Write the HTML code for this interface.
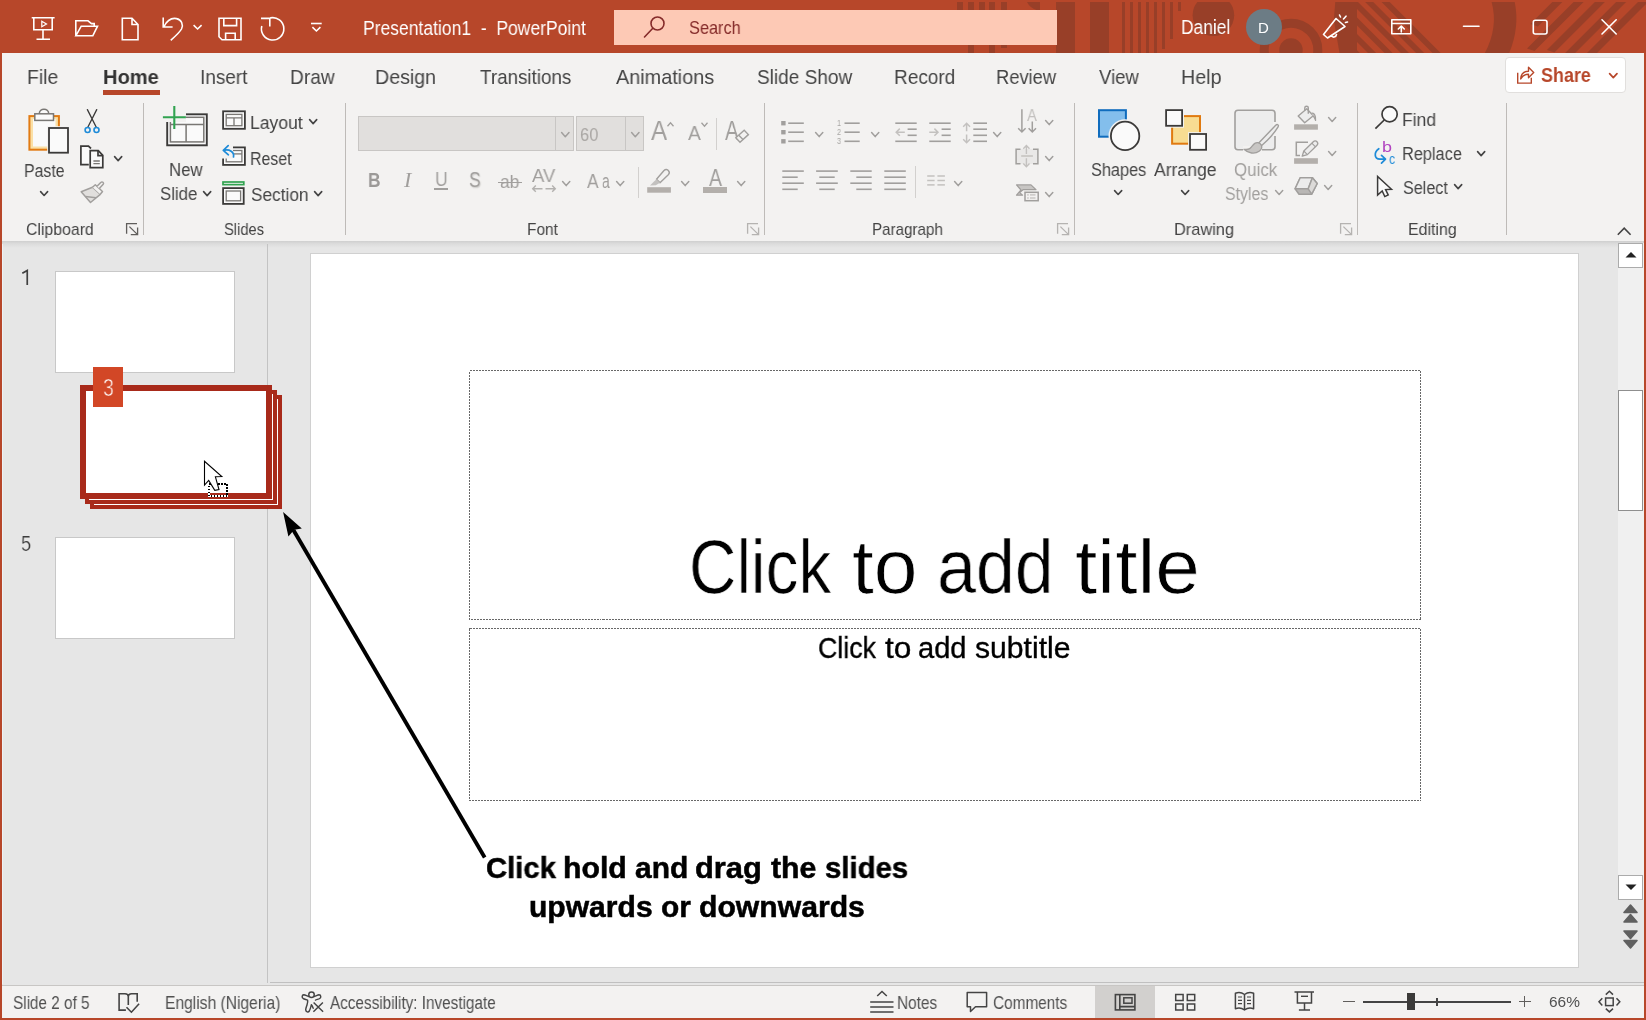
<!DOCTYPE html><html><head><meta charset="utf-8"><title>PowerPoint</title><style>html,body{margin:0;padding:0;}body{width:1646px;height:1020px;position:relative;overflow:hidden;background:#e6e6e6;font-family:"Liberation Sans",sans-serif;}svg{display:block}</style></head><body>
<div style="position:absolute;left:0px;top:0px;width:1646px;height:1020px;background:#b7472a;"></div>
<div style="position:absolute;left:2px;top:53px;width:1642px;height:965px;background:#e6e6e6;"></div>
<div style="position:absolute;left:2px;top:53px;width:1642px;height:188px;background:#f3f2f1;"></div>
<div style="position:absolute;left:2px;top:241px;width:1642px;height:7px;background:linear-gradient(#cfcfcf,#dcdcdc 40%,#e6e6e6);"></div>
<div style="position:absolute;left:267px;top:244px;width:1px;height:739px;background:#c3c3c3;"></div>
<div style="position:absolute;left:270px;top:982px;width:1374px;height:1px;background:#c0c0c0;"></div>
<div style="position:absolute;left:2px;top:985px;width:1642px;height:1px;background:#c8c6c4;"></div>
<div style="position:absolute;left:2px;top:986px;width:1642px;height:32px;background:#f3f2f1;"></div>
<div style="position:absolute;left:2px;top:244px;width:1px;height:740px;background:#eef2f4;"></div>
<svg style="position:absolute;left:0;top:2px;overflow:hidden" width="1646" height="51" viewBox="0 2 1646 51"><g fill="#983f28">
<rect x="957" y="2" width="6" height="8"/><rect x="968" y="2" width="6" height="51"/><rect x="979" y="2" width="6" height="8"/>
<rect x="989" y="2" width="6" height="51"/><rect x="1001" y="2" width="6" height="46"/>
<path d="M1027 2 H1040 V10 H1036.500 Q1030 8 1027 2 Z"/>
<rect x="1056" y="2" width="19" height="51"/><rect x="1090" y="2" width="19" height="51"/>
<rect x="1122" y="2" width="3" height="51"/><rect x="1130" y="2" width="3" height="51"/><rect x="1138" y="2" width="3" height="51"/>
<rect x="1146" y="2" width="3" height="51"/><rect x="1154" y="2" width="3" height="51"/><rect x="1162" y="2" width="3" height="47"/>
<rect x="1170" y="2" width="3" height="37"/><rect x="1178" y="2" width="3" height="9"/>
<circle cx="1213.400" cy="15.300" r="20.800"/>
<circle cx="1291" cy="50" r="11.700"/>
<circle cx="1291" cy="50" r="26.800" fill="none" stroke="#983f28" stroke-width="9"/>
<path d="M1335.300 2 H1357 V53 H1339.500 L1333.800 20 Z"/></g><clipPath id="cl1"><rect x="1356" y="0" width="120" height="53"/></clipPath><g fill="#983f28" clip-path="url(#cl1)"><path d="M1284.5 2 H1292.6 L1343.6 53 H1335.5 Z"/><path d="M1300.7 2 H1308.8 L1359.8 53 H1351.7 Z"/><path d="M1317.0 2 H1325.1 L1376.1 53 H1368.0 Z"/><path d="M1333.5 2 H1341.6 L1392.6 53 H1384.5 Z"/><path d="M1349.9 2 H1358.0 L1409.0 53 H1400.9 Z"/><path d="M1365.1 2 H1373.2 L1424.2 53 H1416.1 Z"/><path d="M1381.5 2 H1389.6 L1440.6 53 H1432.5 Z"/></g><path d="M1491.600 2 H1514.700 Q1519.900 27 1509.200 53 H1484.900 Q1498.500 27 1491.600 2 Z" fill="#983f28"/><g fill="#983f28"><path d="M1552.3 2 H1562.3 L1537.8 26.5 L1530.3 24.0 Z"/><path d="M1573.6 2 H1583.6 L1534.5 51.1 L1527.0 48.6 Z"/><path d="M1594.9 2 H1604.9 L1554.4 52.5 L1546.9 50.0 Z"/><path d="M1616.1 2 H1626.1 L1575.1 53 H1565.1 Z"/><path d="M1638.0 2 H1648.0 L1597.0 53 H1587.0 Z"/></g></svg>
<div style="position:absolute;left:614px;top:10px;width:443px;height:35px;background:#fdc9b5;"></div>
<svg style="position:absolute;left:0;top:0" width="340" height="53" viewBox="0 0 340 53"><g fill="none" stroke="#fff" stroke-width="1.6" stroke-linejoin="miter" stroke-linecap="butt">
<path d="M31.700 17.800 H54.600 M33.800 17.800 V29.800 H52.200 V17.800 M43 29.800 V39 M36.500 39.200 H50"/><path d="M41.800 21.300 L46.500 24 L41.800 26.700 Z" stroke-width="1.200"/>
<path d="M75.800 35.800 V20.800 H88 L91.500 23.600 H94.200 V26 M75.800 35.800 L81.200 26.200 H97.500 L92.800 35.800 Z"/>
<path d="M122.300 18.300 H132 L138 24.500 V39.700 H122.300 Z M132 18.300 V24.500 H138"/>
<path d="M163.200 17.600 V27 H172.600 M164 26.600 C167 20.500 172 17.800 176.500 18.600 C181.500 19.600 183.600 24.500 181.500 29 C180 32 175 36.500 170.800 40.300"/>
<path d="M193.600 25.200 L197.600 29 L201.600 25.200"/>
<path d="M219 18.300 H241 V39.700 H222 L219 36.700 Z M223.800 18.300 V25.600 H236.600 V18.300 M225.600 39.700 V33.200 H235.200 V39.700"/>
<path d="M261 18.400 H269.800 V26.600 M270.300 17.900 A11.200 11.200 0 1 1 261.800 26"/>
<path d="M311 23.500 H321.700"/><path d="M312.400 27.200 L316.400 31 L320.400 27.200"/>
</g></svg>
<span style="position:absolute;left:362.602px;top:17px;font:normal normal 19.5px/22px 'Liberation Sans',sans-serif;color:#fff;white-space:pre;will-change:transform;transform-origin:0 0;transform:scaleX(0.898);">Presentation1  -  PowerPoint</span>
<svg style="position:absolute;left:640px;top:12px" width="30" height="30" viewBox="640 12 30 30"><g fill="none" stroke="#852b2a" stroke-width="1.6" stroke-linecap="round"><circle cx="657.500" cy="23.500" r="6.500"/><path d="M652.800 28.300 L644.500 37"/></g></svg>
<span style="position:absolute;left:688.7px;top:18px;font:normal normal 18.2px/20px 'Liberation Sans',sans-serif;color:#852b2a;white-space:pre;will-change:transform;transform-origin:0 0;transform:scaleX(0.897);">Search</span>
<span style="position:absolute;left:1180.808px;top:16px;font:normal normal 19.5px/22px 'Liberation Sans',sans-serif;color:#fff;white-space:pre;will-change:transform;transform-origin:0 0;transform:scaleX(0.892);">Daniel</span>
<div style="position:absolute;left:1246px;top:9px;width:36px;height:36px;border-radius:50%;background:#6c7c85"></div>
<span style="position:absolute;left:1257.81px;top:19px;font:normal normal 15px/17px 'Liberation Sans',sans-serif;color:#fff;white-space:pre;will-change:transform;transform-origin:0 0;transform:scaleX(0.99);">D</span>
<svg style="position:absolute;left:1300px;top:0" width="346" height="53" viewBox="1300 0 346 53"><g fill="none" stroke="#fff" stroke-width="1.6" stroke-linejoin="round" stroke-linecap="round">
<path d="M1323.500 34.500 L1336 18.500 L1345 26.500 L1327.500 38 Z M1331.500 35.500 C1332.500 38 1336 37.500 1336.500 34.500"/>
<path d="M1340.500 17 L1339.500 15 M1343.500 19 L1346 16.200 M1345.500 22.500 L1347.500 22"/>
<path d="M1391.800 19.800 H1410.800 V33.800 H1391.800 Z M1391.800 23.500 H1410.800 M1401.300 32 V26.500 M1398.300 29 L1401.300 26 L1404.300 29"/>
<path d="M1463.500 26.300 H1479"/>
<rect x="1533.300" y="20.300" width="13.700" height="13.700" rx="2"/>
<path d="M1602 19.800 L1616.200 34 M1616.200 19.800 L1602 34"/>
</g></svg>
<span style="position:absolute;left:26.548px;top:66px;font:normal normal 20.3px/22px 'Liberation Sans',sans-serif;color:#444;white-space:pre;will-change:transform;transform-origin:0 0;transform:scaleX(0.952);">File</span>
<span style="position:absolute;left:199.664px;top:66px;font:normal normal 20.3px/22px 'Liberation Sans',sans-serif;color:#444;white-space:pre;will-change:transform;transform-origin:0 0;transform:scaleX(0.936);">Insert</span>
<span style="position:absolute;left:290.057px;top:66px;font:normal normal 20.3px/22px 'Liberation Sans',sans-serif;color:#444;white-space:pre;will-change:transform;transform-origin:0 0;transform:scaleX(0.943);">Draw</span>
<span style="position:absolute;left:375.432px;top:66px;font:normal normal 20.3px/22px 'Liberation Sans',sans-serif;color:#444;white-space:pre;will-change:transform;transform-origin:0 0;transform:scaleX(0.968);">Design</span>
<span style="position:absolute;left:479.8px;top:66px;font:normal normal 20.3px/22px 'Liberation Sans',sans-serif;color:#444;white-space:pre;will-change:transform;transform-origin:0 0;transform:scaleX(0.928);">Transitions</span>
<span style="position:absolute;left:615.7px;top:66px;font:normal normal 20.3px/22px 'Liberation Sans',sans-serif;color:#444;white-space:pre;will-change:transform;transform-origin:0 0;transform:scaleX(0.978);">Animations</span>
<span style="position:absolute;left:757.4px;top:66px;font:normal normal 20.3px/22px 'Liberation Sans',sans-serif;color:#444;white-space:pre;will-change:transform;transform-origin:0 0;transform:scaleX(0.939);">Slide Show</span>
<span style="position:absolute;left:893.862px;top:66px;font:normal normal 20.3px/22px 'Liberation Sans',sans-serif;color:#444;white-space:pre;will-change:transform;transform-origin:0 0;transform:scaleX(0.938);">Record</span>
<span style="position:absolute;left:995.596px;top:66px;font:normal normal 20.3px/22px 'Liberation Sans',sans-serif;color:#444;white-space:pre;will-change:transform;transform-origin:0 0;transform:scaleX(0.904);">Review</span>
<span style="position:absolute;left:1098.6px;top:66px;font:normal normal 20.3px/22px 'Liberation Sans',sans-serif;color:#444;white-space:pre;will-change:transform;transform-origin:0 0;transform:scaleX(0.912);">View</span>
<span style="position:absolute;left:1180.83px;top:66px;font:normal normal 20.3px/22px 'Liberation Sans',sans-serif;color:#444;white-space:pre;will-change:transform;transform-origin:0 0;transform:scaleX(0.97);">Help</span>
<span style="position:absolute;left:103.01px;top:66px;font:normal bold 20.3px/22px 'Liberation Sans',sans-serif;color:#333;white-space:pre;will-change:transform;transform-origin:0 0;transform:scaleX(0.99);">Home</span>
<div style="position:absolute;left:103px;top:90px;width:57px;height:5px;background:#b7472a;"></div>
<div style="position:absolute;left:1504.5px;top:56.5px;width:121px;height:36px;box-sizing:border-box;background:#fff;border:1px solid #e1dfdd;border-radius:4px"></div>
<svg style="position:absolute;left:1514px;top:62px" width="24" height="24" viewBox="1514 62 24 24"><g fill="none" stroke="#b7472a" stroke-width="1.400" stroke-linejoin="miter" stroke-linecap="butt"><path d="M1517.700 72.800 V83.100 H1531.300 V77.800"/><path d="M1520.700 79 C1521 73.500 1524.500 71.300 1528.500 71.200 V67.300 L1533.700 72.500 L1528.500 77.700 V74.300 C1525 74.300 1522.500 75.500 1520.700 79 Z" stroke-linejoin="round"/></g></svg>
<span style="position:absolute;left:1541.4px;top:64px;font:normal bold 20.3px/22px 'Liberation Sans',sans-serif;color:#b7472a;white-space:pre;will-change:transform;transform-origin:0 0;transform:scaleX(0.884);">Share</span>
<svg style="position:absolute;left:1608.7px;top:72.8px;overflow:visible" width="8.6" height="5.6"><path d="M0.6 0.6 L4.3 4.6 L8.0 0.6" fill="none" stroke="#b7472a" stroke-width="1.7" stroke-linecap="round" stroke-linejoin="round"/></svg>
<div style="position:absolute;left:143px;top:103px;width:1px;height:132px;background:#bebbb8;"></div>
<div style="position:absolute;left:345px;top:103px;width:1px;height:132px;background:#bebbb8;"></div>
<div style="position:absolute;left:764px;top:103px;width:1px;height:132px;background:#bebbb8;"></div>
<div style="position:absolute;left:1074px;top:103px;width:1px;height:132px;background:#bebbb8;"></div>
<div style="position:absolute;left:1357px;top:103px;width:1px;height:132px;background:#bebbb8;"></div>
<div style="position:absolute;left:1506px;top:103px;width:1px;height:132px;background:#bebbb8;"></div>
<svg style="position:absolute;left:20px;top:100px;overflow:visible;" width="60" height="60" viewBox="20 100 60 60">
<rect x="29.400" y="116.100" width="29.500" height="33.600" fill="#fbe0a6" stroke="#e27b13" stroke-width="2"/>
<rect x="33" y="119" width="22.500" height="27.500" fill="#fafafa"/>
<path d="M39.300 113.800 C39.300 107.800 48.700 107.800 48.700 113.800" fill="#fafafa" stroke="#797774" stroke-width="1.500"/>
<rect x="34.800" y="113.800" width="18.700" height="6.600" fill="#fafafa" stroke="#797774" stroke-width="1.500"/>
<rect x="47.200" y="126.200" width="22.600" height="28.300" fill="#f3f2f1"/>
<rect x="49" y="128" width="19" height="24.700" fill="#fafafa" stroke="#3b3a39" stroke-width="1.800"/></svg>
<span style="position:absolute;left:24.331px;top:160px;font:normal normal 18.3px/21px 'Liberation Sans',sans-serif;color:#444;white-space:pre;will-change:transform;transform-origin:0 0;transform:scaleX(0.869);">Paste</span>
<svg style="position:absolute;left:40.2px;top:191.3px;overflow:visible" width="8.2" height="5.5"><path d="M0.6 0.6 L4.1 4.5 L7.6 0.6" fill="none" stroke="#444" stroke-width="1.6" stroke-linecap="round" stroke-linejoin="round"/></svg>
<svg style="position:absolute;left:80px;top:105px;overflow:visible;" width="30" height="30" viewBox="80 105 30 30"><g fill="none" stroke="#3b3a39" stroke-width="1.300" stroke-linecap="round"><path d="M87.400 109.600 L96.300 127.300 M96.700 109.600 L87.800 127.300"/></g>
<g fill="none" stroke="#1e8bd8" stroke-width="1.600"><circle cx="87.600" cy="130" r="2.500"/><circle cx="96.500" cy="130" r="2.500"/></g></svg>
<svg style="position:absolute;left:78px;top:143px;overflow:visible;" width="30" height="30" viewBox="78 143 30 30"><g stroke="#3b3a39" stroke-width="1.700" fill="#fafafa" stroke-linejoin="miter">
<path d="M88.800 164.600 H80.900 V146.200 H88.500 L91 148.500"/>
<path d="M90.200 150.700 H98.300 L102.800 155.300 V167.600 H90.200 Z"/><path d="M98 150.700 V155.600 H102.800" fill="none"/></g>
<g stroke="#797774" stroke-width="1.300"><path d="M93.400 161 H99.800 M93.400 163.700 H99.800"/></g></svg>
<svg style="position:absolute;left:114.1px;top:156px;overflow:visible" width="8.3" height="5.6"><path d="M0.6 0.6 L4.15 4.6 L7.700000000000001 0.6" fill="none" stroke="#444" stroke-width="1.6" stroke-linecap="round" stroke-linejoin="round"/></svg>
<svg style="position:absolute;left:78px;top:178px;overflow:visible;" width="30" height="30" viewBox="78 178 30 30"><g stroke="#a19f9d" stroke-width="1.500" fill="#e1dfdd" stroke-linejoin="round">
<path d="M81.200 191.700 L92.500 187.200 L100.300 194.300 L90.500 202.500 Z"/>
<path d="M92.500 187.200 L95.300 184.800 L102.500 191.500 L100.300 194.300" fill="#f3f2f1"/>
<path d="M97 186.300 L101 182.300 C102.200 181 104.300 183 103.200 184.300 L99.300 188.500" fill="#f3f2f1"/>
<path d="M85.600 196.400 L96 197.700" fill="none"/></g></svg>
<span style="position:absolute;left:26.3px;top:220px;font:normal normal 17px/19px 'Liberation Sans',sans-serif;color:#444;white-space:pre;will-change:transform;transform-origin:0 0;transform:scaleX(0.931);">Clipboard</span>
<svg style="position:absolute;left:125.6px;top:222.7px;overflow:visible;" width="12" height="12" viewBox="0 0 12 12"><g fill="none" stroke="#605e5c" stroke-width="1.300"><path d="M0.600 10.800 V0.600 H11"/><path d="M3.400 3.600 L11.600 11.600 M4.800 11.600 H11.600 V4.400"/></g></svg>
<svg style="position:absolute;left:158px;top:100px;overflow:visible;" width="55" height="50" viewBox="158 100 55 50"><g fill="none" stroke-linejoin="miter">
<rect x="167.200" y="114.300" width="39.600" height="31" fill="#fafafa" stroke="#3b3a39" stroke-width="1.900"/>
<rect x="170.400" y="117.300" width="33.400" height="24.600" fill="#fafafa" stroke="#797774" stroke-width="1.500"/>
<path d="M170.400 124.600 H203.800 M186.100 124.600 V142" stroke="#797774" stroke-width="1.500"/>
<rect x="161" y="104" width="25" height="18" fill="#f3f2f1" stroke="none"/><rect x="161" y="104" width="11.500" height="16.800" fill="#f3f2f1" stroke="none"/>
<path d="M174.300 106 V129 M162.900 117.200 H185.900" stroke="#31a350" stroke-width="2.100"/></g></svg>
<span style="position:absolute;left:169.379px;top:159px;font:normal normal 18.3px/21px 'Liberation Sans',sans-serif;color:#444;white-space:pre;will-change:transform;transform-origin:0 0;transform:scaleX(0.921);">New</span>
<span style="position:absolute;left:159.8px;top:183px;font:normal normal 18.3px/21px 'Liberation Sans',sans-serif;color:#444;white-space:pre;will-change:transform;transform-origin:0 0;transform:scaleX(0.919);">Slide</span>
<svg style="position:absolute;left:203.3px;top:190.5px;overflow:visible" width="8.3" height="5.6"><path d="M0.6 0.6 L4.15 4.6 L7.700000000000001 0.6" fill="none" stroke="#444" stroke-width="1.6" stroke-linecap="round" stroke-linejoin="round"/></svg>
<svg style="position:absolute;left:220px;top:108px;overflow:visible;" width="28" height="24" viewBox="220 108 28 24"><rect x="223.100" y="111.300" width="21.800" height="17.500" fill="#fafafa" stroke="#3b3a39" stroke-width="1.800"/>
<rect x="226.200" y="114.400" width="15.700" height="11.300" fill="#fafafa" stroke="#797774" stroke-width="1.300"/>
<path d="M226.200 117.800 H241.900 M234 117.800 V125.700" stroke="#797774" stroke-width="1.300"/></svg>
<span style="position:absolute;left:250.241px;top:112px;font:normal normal 18.3px/21px 'Liberation Sans',sans-serif;color:#444;white-space:pre;will-change:transform;transform-origin:0 0;transform:scaleX(0.959);">Layout</span>
<svg style="position:absolute;left:309px;top:118.6px;overflow:visible" width="8.3" height="5.6"><path d="M0.6 0.6 L4.15 4.6 L7.700000000000001 0.6" fill="none" stroke="#444" stroke-width="1.6" stroke-linecap="round" stroke-linejoin="round"/></svg>
<svg style="position:absolute;left:220px;top:143px;overflow:visible;" width="28" height="24" viewBox="220 143 28 24"><rect x="223.100" y="147.400" width="21.800" height="17.500" fill="#fafafa" stroke="#3b3a39" stroke-width="1.800"/>
<rect x="226.200" y="150.500" width="15.700" height="11.300" fill="#fafafa" stroke="#797774" stroke-width="1.300"/>
<path d="M226.200 153.900 H241.900" stroke="#797774" stroke-width="1.300"/>
<rect x="220.500" y="144" width="12.500" height="14.500" fill="#f3f2f1"/>
<path d="M233.500 157 C234.500 152 229.500 149 223.800 150.300 M228.200 145.600 L223.300 150.300 L228.400 154.800" fill="none" stroke="#1e8bd8" stroke-width="1.700" stroke-linecap="round" stroke-linejoin="round"/></svg>
<span style="position:absolute;left:250.33px;top:148px;font:normal normal 18.3px/21px 'Liberation Sans',sans-serif;color:#444;white-space:pre;will-change:transform;transform-origin:0 0;transform:scaleX(0.87);">Reset</span>
<svg style="position:absolute;left:220px;top:179px;overflow:visible;" width="28" height="28" viewBox="220 179 28 28"><rect x="223" y="182" width="20.800" height="2.600" fill="#fafafa" stroke="#31a350" stroke-width="1.700"/>
<rect x="223.100" y="188.100" width="20.600" height="15.800" fill="#fafafa" stroke="#3b3a39" stroke-width="1.800"/>
<rect x="226.200" y="191" width="14.400" height="9.800" fill="#fafafa" stroke="#797774" stroke-width="1.300"/></svg>
<span style="position:absolute;left:251.2px;top:184px;font:normal normal 18.3px/21px 'Liberation Sans',sans-serif;color:#444;white-space:pre;will-change:transform;transform-origin:0 0;transform:scaleX(0.943);">Section</span>
<svg style="position:absolute;left:314px;top:191.3px;overflow:visible" width="8.3" height="5.6"><path d="M0.6 0.6 L4.15 4.6 L7.700000000000001 0.6" fill="none" stroke="#444" stroke-width="1.6" stroke-linecap="round" stroke-linejoin="round"/></svg>
<span style="position:absolute;left:224.4px;top:220px;font:normal normal 17px/19px 'Liberation Sans',sans-serif;color:#444;white-space:pre;will-change:transform;transform-origin:0 0;transform:scaleX(0.865);">Slides</span>
<div style="position:absolute;left:358px;top:116px;width:216px;height:35px;box-sizing:border-box;background:#e1dfdd;border:1px solid #c8c6c4"></div>
<div style="position:absolute;left:555px;top:117px;width:1px;height:33px;background:#c8c6c4;"></div>
<svg style="position:absolute;left:561px;top:132px;overflow:visible" width="8.6" height="5.8"><path d="M0.6 0.6 L4.3 4.8 L8.0 0.6" fill="none" stroke="#a19f9d" stroke-width="1.5" stroke-linecap="round" stroke-linejoin="round"/></svg>
<div style="position:absolute;left:576px;top:116px;width:68px;height:35px;box-sizing:border-box;background:#e1dfdd;border:1px solid #c8c6c4"></div>
<div style="position:absolute;left:625px;top:117px;width:1px;height:33px;background:#c8c6c4;"></div>
<svg style="position:absolute;left:630.8px;top:132px;overflow:visible" width="8.6" height="5.8"><path d="M0.6 0.6 L4.3 4.8 L8.0 0.6" fill="none" stroke="#a19f9d" stroke-width="1.5" stroke-linecap="round" stroke-linejoin="round"/></svg>
<span style="position:absolute;left:579.8px;top:124px;font:normal normal 18.3px/21px 'Liberation Sans',sans-serif;color:#a9a6a3;white-space:pre;will-change:transform;transform-origin:0 0;transform:scaleX(0.902);">60</span>
<span style="position:absolute;left:651.4px;top:115px;font:normal normal 28px/31px 'Liberation Sans',sans-serif;color:#a19f9d;white-space:pre;will-change:transform;transform-origin:0 0;transform:scaleX(0.863);">A</span>
<svg style="position:absolute;left:666.9px;top:121.8px;overflow:visible;" width="7" height="5" viewBox="0 0 7 5"><path d="M0.500 4.200 L3.500 0.800 L6.500 4.200" fill="none" stroke="#a19f9d" stroke-width="1.300"/></svg>
<span style="position:absolute;left:688.1px;top:121px;font:normal normal 21px/23px 'Liberation Sans',sans-serif;color:#a19f9d;white-space:pre;will-change:transform;transform-origin:0 0;transform:scaleX(0.921);">A</span>
<svg style="position:absolute;left:700.7px;top:121.8px;overflow:visible;" width="7" height="5" viewBox="0 0 7 5"><path d="M0.500 0.800 L3.500 4.200 L6.500 0.800" fill="none" stroke="#a19f9d" stroke-width="1.300"/></svg>
<div style="position:absolute;left:716px;top:118px;width:1px;height:32px;background:#d2d0ce;"></div>
<span style="position:absolute;left:725.1px;top:115px;font:normal normal 28px/31px 'Liberation Sans',sans-serif;color:#a19f9d;white-space:pre;will-change:transform;transform-origin:0 0;transform:scaleX(0.737);">A</span>
<svg style="position:absolute;left:733px;top:128px;overflow:visible;" width="18" height="17" viewBox="733 128 18 17"><g fill="#f3f2f1" stroke="#a19f9d" stroke-width="1.400"><path d="M735.800 137.800 L744.200 130.300 L748.400 134.600 L740 142.300 Z"/><path d="M738.800 135.200 L743 139.600" fill="none"/></g></svg>
<span style="position:absolute;left:368.062px;top:168px;font:normal bold 20.6px/23px 'Liberation Sans',sans-serif;color:#9b9997;white-space:pre;will-change:transform;transform-origin:0 0;transform:scaleX(0.838);">B</span>
<span style="position:absolute;left:404.456px;top:168px;font:italic normal 21px/24px 'Liberation Serif',sans-serif;color:#a19f9d;white-space:pre;will-change:transform;transform-origin:0 0;transform:scaleX(1.056);">I</span>
<span style="position:absolute;left:434.631px;top:168px;font:normal normal 20.3px/22px 'Liberation Sans',sans-serif;color:#a19f9d;white-space:pre;will-change:transform;transform-origin:0 0;transform:scaleX(0.869);">U</span>
<div style="position:absolute;left:434.3px;top:188.1px;width:13.5px;height:1.7px;background:#a19f9d;"></div>
<span style="position:absolute;left:469.108px;top:167px;font:normal normal 22px/25px 'Liberation Sans',sans-serif;color:#a19f9d;white-space:pre;will-change:transform;transform-origin:0 0;transform:scaleX(0.792);text-shadow:1px 1px 1.500px #c8c6c4;">S</span>
<span style="position:absolute;left:500.2px;top:171px;font:normal normal 19px/21px 'Liberation Sans',sans-serif;color:#a19f9d;white-space:pre;will-change:transform;transform-origin:0 0;transform:scaleX(0.919);">ab</span>
<div style="position:absolute;left:498.1px;top:182px;width:23.8px;height:1.4px;background:#a19f9d;"></div>
<span style="position:absolute;left:532.1px;top:165px;font:normal normal 19px/21px 'Liberation Sans',sans-serif;color:#a19f9d;white-space:pre;will-change:transform;transform-origin:0 0;transform:scaleX(0.973);">AV</span>
<svg style="position:absolute;left:532px;top:184.5px;overflow:visible;" width="24" height="8" viewBox="0 0 24 8"><g fill="none" stroke="#b3b1af" stroke-width="1.400"><path d="M0.500 3.700 H10.500 M3.800 0.600 L0.700 3.700 L3.800 6.800"/><path d="M13.500 3.700 H23.500 M20.200 0.600 L23.300 3.700 L20.200 6.800"/></g></svg>
<svg style="position:absolute;left:562.1px;top:180.5px;overflow:visible" width="8.4" height="5.6"><path d="M0.6 0.6 L4.2 4.6 L7.800000000000001 0.6" fill="none" stroke="#a19f9d" stroke-width="1.5" stroke-linecap="round" stroke-linejoin="round"/></svg>
<span style="position:absolute;left:586.8px;top:169px;font:normal normal 20.5px/23px 'Liberation Sans',sans-serif;color:#a19f9d;white-space:pre;will-change:transform;transform-origin:0 0;transform:scaleX(0.85);">A</span>
<span style="position:absolute;left:602.2px;top:169px;font:normal normal 20.5px/23px 'Liberation Sans',sans-serif;color:#a19f9d;white-space:pre;will-change:transform;transform-origin:0 0;transform:scaleX(0.675);">a</span>
<svg style="position:absolute;left:616.2px;top:180.5px;overflow:visible" width="8.4" height="5.6"><path d="M0.6 0.6 L4.2 4.6 L7.800000000000001 0.6" fill="none" stroke="#a19f9d" stroke-width="1.5" stroke-linecap="round" stroke-linejoin="round"/></svg>
<div style="position:absolute;left:638px;top:166.5px;width:1px;height:31px;background:#d2d0ce;"></div>
<svg style="position:absolute;left:645px;top:166px;overflow:visible;" width="30" height="30" viewBox="645 166 30 30"><rect x="647.200" y="187.200" width="23.700" height="5.500" fill="#b3afab"/>
<g fill="#f3f2f1" stroke="#a19f9d" stroke-width="1.400" stroke-linejoin="round"><path d="M656.500 179.300 L664 170.500 C665.500 169 667.500 169.400 668.500 170.700 C669.600 172 669.500 173.600 668.300 174.800 L660 182.700 Z"/></g>
<path d="M656.500 179.300 L660 182.700 L655.800 185.300 L650 185.400 L654 181.500 Z" fill="#c3c1bf"/></svg>
<svg style="position:absolute;left:681.1px;top:180.5px;overflow:visible" width="8.4" height="5.6"><path d="M0.6 0.6 L4.2 4.6 L7.800000000000001 0.6" fill="none" stroke="#a19f9d" stroke-width="1.5" stroke-linecap="round" stroke-linejoin="round"/></svg>
<span style="position:absolute;left:708.6px;top:165px;font:normal normal 23px/26px 'Liberation Sans',sans-serif;color:#a19f9d;white-space:pre;will-change:transform;transform-origin:0 0;transform:scaleX(0.844);">A</span>
<div style="position:absolute;left:703.1px;top:187.2px;width:23.7px;height:5.5px;background:#b3afab;"></div>
<svg style="position:absolute;left:737px;top:180.5px;overflow:visible" width="8.4" height="5.6"><path d="M0.6 0.6 L4.2 4.6 L7.800000000000001 0.6" fill="none" stroke="#a19f9d" stroke-width="1.5" stroke-linecap="round" stroke-linejoin="round"/></svg>
<span style="position:absolute;left:526.79px;top:220px;font:normal normal 17px/19px 'Liberation Sans',sans-serif;color:#444;white-space:pre;will-change:transform;transform-origin:0 0;transform:scaleX(0.91);">Font</span>
<svg style="position:absolute;left:747px;top:223px;overflow:visible;" width="12" height="12" viewBox="0 0 12 12"><g fill="none" stroke="#b5b3b1" stroke-width="1.300"><path d="M0.600 10.800 V0.600 H11"/><path d="M3.400 3.600 L11.600 11.600 M4.800 11.600 H11.600 V4.400"/></g></svg>
<svg style="position:absolute;left:775px;top:100px;overflow:visible;" width="300" height="110" viewBox="775 100 300 110"><rect x="781.200" y="121.00" width="4.400" height="4.400" fill="#a19f9d"/><rect x="781.200" y="130.00" width="4.400" height="4.400" fill="#a19f9d"/><rect x="781.200" y="139.10" width="4.400" height="4.400" fill="#a19f9d"/><rect x="788.2" y="122.40" width="15.60" height="1.6" fill="#a19f9d"/><rect x="788.2" y="131.40" width="15.60" height="1.6" fill="#a19f9d"/><rect x="788.2" y="140.50" width="15.60" height="1.6" fill="#a19f9d"/><rect x="844.5" y="122.40" width="15.20" height="1.6" fill="#a19f9d"/><rect x="844.5" y="131.40" width="15.20" height="1.6" fill="#a19f9d"/><rect x="844.5" y="140.50" width="15.20" height="1.6" fill="#a19f9d"/><rect x="895.3" y="122.40" width="21.40" height="1.6" fill="#a19f9d"/><rect x="895.3" y="140.50" width="21.40" height="1.6" fill="#a19f9d"/><rect x="907.6" y="128.40" width="9.10" height="1.6" fill="#a19f9d"/><rect x="907.6" y="134.50" width="9.10" height="1.6" fill="#a19f9d"/><path d="M896 132.200 H904.800 M899.800 128.600 L896.200 132.200 L899.800 135.800" fill="none" stroke="#c3c1bf" stroke-width="1.500"/><rect x="929.3" y="122.40" width="21.40" height="1.6" fill="#a19f9d"/><rect x="929.3" y="140.50" width="21.40" height="1.6" fill="#a19f9d"/><rect x="941.6" y="128.40" width="9.10" height="1.6" fill="#a19f9d"/><rect x="941.6" y="134.50" width="9.10" height="1.6" fill="#a19f9d"/><path d="M929.300 132.200 H938 M934.400 128.600 L938 132.200 L934.400 135.800" fill="none" stroke="#c3c1bf" stroke-width="1.500"/><rect x="973.3" y="122.40" width="13.70" height="1.6" fill="#a19f9d"/><rect x="973.3" y="128.40" width="13.70" height="1.6" fill="#a19f9d"/><rect x="973.3" y="134.50" width="13.70" height="1.6" fill="#a19f9d"/><rect x="973.3" y="140.50" width="13.70" height="1.6" fill="#a19f9d"/><path d="M966.600 123.400 V131.200 M963.200 126.800 L966.600 123.300 L970 126.800 M966.600 134.600 V142.600 M963.200 139.200 L966.600 142.700 L970 139.200" fill="none" stroke="#c3c1bf" stroke-width="1.500"/><rect x="782.3" y="170.30" width="21.50" height="1.6" fill="#a19f9d"/><rect x="782.3" y="176.40" width="15.40" height="1.6" fill="#a19f9d"/><rect x="782.3" y="182.40" width="21.50" height="1.6" fill="#a19f9d"/><rect x="782.3" y="188.50" width="15.40" height="1.6" fill="#a19f9d"/><rect x="816.1" y="170.30" width="21.70" height="1.6" fill="#a19f9d"/><rect x="819.3" y="176.40" width="15.40" height="1.6" fill="#a19f9d"/><rect x="816.1" y="182.40" width="21.70" height="1.6" fill="#a19f9d"/><rect x="819.3" y="188.50" width="15.40" height="1.6" fill="#a19f9d"/><rect x="850.3" y="170.30" width="21.40" height="1.6" fill="#a19f9d"/><rect x="856.3" y="176.40" width="15.40" height="1.6" fill="#a19f9d"/><rect x="850.3" y="182.40" width="21.40" height="1.6" fill="#a19f9d"/><rect x="856.3" y="188.50" width="15.40" height="1.6" fill="#a19f9d"/><rect x="884.3" y="170.30" width="21.50" height="1.6" fill="#a19f9d"/><rect x="884.3" y="176.40" width="21.50" height="1.6" fill="#a19f9d"/><rect x="884.3" y="182.40" width="21.50" height="1.6" fill="#a19f9d"/><rect x="884.3" y="188.50" width="21.50" height="1.6" fill="#a19f9d"/><rect x="927.2" y="175.25" width="7.40" height="1.5" fill="#c3c1bf"/><rect x="927.2" y="179.75" width="7.40" height="1.5" fill="#c3c1bf"/><rect x="927.2" y="184.15" width="7.40" height="1.5" fill="#c3c1bf"/><rect x="937.4" y="175.25" width="7.50" height="1.5" fill="#c3c1bf"/><rect x="937.4" y="179.75" width="7.50" height="1.5" fill="#c3c1bf"/><rect x="937.4" y="184.15" width="7.50" height="1.5" fill="#c3c1bf"/><path d="M1021.900 109.200 V132 M1018.200 128.200 L1021.900 132 L1025.600 128.200 M1032.300 121.600 V132 M1028.600 128.200 L1032.300 132 L1036 128.200" fill="none" stroke="#a19f9d" stroke-width="1.500"/><rect x="1016" y="149" width="22" height="15" fill="#e9e8e7"/><path d="M1020.500 149.200 H1016.100 V163.700 H1020.500 M1033 149.200 H1037.900 V163.700 H1033" fill="none" stroke="#a19f9d" stroke-width="1.500"/><path d="M1021.200 156 H1032.900 M1026.400 145.600 V153.900 M1023.300 148.800 L1026.400 145.600 L1029.500 148.800 M1026.400 158.200 V166.700 M1023.300 163.500 L1026.400 166.700 L1029.500 163.500" fill="none" stroke="#c3c1bf" stroke-width="1.400"/><path d="M1016.500 184.900 H1031 L1036 189.700 H1023 L1019.700 192.600 L1022.600 195.200 H1016.500 L1021 190 Z" fill="#c8c6c4" stroke="#a19f9d" stroke-width="1.200" stroke-linejoin="round"/><rect x="1025" y="192.300" width="13.200" height="8.400" fill="#f3f2f1" stroke="#a19f9d" stroke-width="1.500"/><rect x="1030" y="194.25" width="5.50" height="1.3" fill="#c3c1bf"/><rect x="1030" y="197.35" width="5.50" height="1.3" fill="#c3c1bf"/><rect x="1027.200" y="194.200" width="1.500" height="1.400" fill="#c3c1bf"/><rect x="1027.200" y="197.300" width="1.500" height="1.400" fill="#c3c1bf"/></svg>
<span style="position:absolute;left:836.9px;top:119px;font:normal normal 8.2px/9px 'Liberation Sans',sans-serif;color:#a8a6a4;white-space:pre;will-change:transform;transform-origin:0 0;transform:scaleX(0.88);">1</span>
<span style="position:absolute;left:836.9px;top:128px;font:normal normal 8.2px/9px 'Liberation Sans',sans-serif;color:#a8a6a4;white-space:pre;will-change:transform;transform-origin:0 0;transform:scaleX(0.88);">2</span>
<span style="position:absolute;left:836.9px;top:137px;font:normal normal 8.2px/9px 'Liberation Sans',sans-serif;color:#a8a6a4;white-space:pre;will-change:transform;transform-origin:0 0;transform:scaleX(0.88);">3</span>
<svg style="position:absolute;left:815px;top:132.2px;overflow:visible" width="8.4" height="5.6"><path d="M0.6 0.6 L4.2 4.6 L7.800000000000001 0.6" fill="none" stroke="#a19f9d" stroke-width="1.5" stroke-linecap="round" stroke-linejoin="round"/></svg>
<svg style="position:absolute;left:871px;top:132.2px;overflow:visible" width="8.4" height="5.6"><path d="M0.6 0.6 L4.2 4.6 L7.800000000000001 0.6" fill="none" stroke="#a19f9d" stroke-width="1.5" stroke-linecap="round" stroke-linejoin="round"/></svg>
<svg style="position:absolute;left:993.3px;top:132.2px;overflow:visible" width="8.4" height="5.6"><path d="M0.6 0.6 L4.2 4.6 L7.800000000000001 0.6" fill="none" stroke="#a19f9d" stroke-width="1.5" stroke-linecap="round" stroke-linejoin="round"/></svg>
<svg style="position:absolute;left:1045.3px;top:120.2px;overflow:visible" width="8.4" height="5.6"><path d="M0.6 0.6 L4.2 4.6 L7.800000000000001 0.6" fill="none" stroke="#a19f9d" stroke-width="1.5" stroke-linecap="round" stroke-linejoin="round"/></svg>
<svg style="position:absolute;left:1045.3px;top:156.3px;overflow:visible" width="8.4" height="5.6"><path d="M0.6 0.6 L4.2 4.6 L7.800000000000001 0.6" fill="none" stroke="#a19f9d" stroke-width="1.5" stroke-linecap="round" stroke-linejoin="round"/></svg>
<svg style="position:absolute;left:1045.3px;top:192.4px;overflow:visible" width="8.4" height="5.6"><path d="M0.6 0.6 L4.2 4.6 L7.800000000000001 0.6" fill="none" stroke="#a19f9d" stroke-width="1.5" stroke-linecap="round" stroke-linejoin="round"/></svg>
<svg style="position:absolute;left:954.2px;top:180.5px;overflow:visible" width="8.4" height="5.6"><path d="M0.6 0.6 L4.2 4.6 L7.800000000000001 0.6" fill="none" stroke="#a19f9d" stroke-width="1.5" stroke-linecap="round" stroke-linejoin="round"/></svg>
<div style="position:absolute;left:915px;top:166px;width:1px;height:31.5px;background:#d2d0ce;"></div>
<span style="position:absolute;left:1027.3px;top:106px;font:normal normal 16.5px/18px 'Liberation Sans',sans-serif;color:#c3c1bf;white-space:pre;will-change:transform;transform-origin:0 0;transform:scaleX(0.9);">A</span>
<span style="position:absolute;left:871.608px;top:220px;font:normal normal 17px/19px 'Liberation Sans',sans-serif;color:#444;white-space:pre;will-change:transform;transform-origin:0 0;transform:scaleX(0.892);">Paragraph</span>
<svg style="position:absolute;left:1057px;top:223px;overflow:visible;" width="12" height="12" viewBox="0 0 12 12"><g fill="none" stroke="#b5b3b1" stroke-width="1.300"><path d="M0.600 10.800 V0.600 H11"/><path d="M3.400 3.600 L11.600 11.600 M4.800 11.600 H11.600 V4.400"/></g></svg>
<svg style="position:absolute;left:1095px;top:105px;overflow:visible;" width="50" height="50" viewBox="1095 105 50 50"><rect x="1099" y="110.200" width="26.900" height="26.500" fill="#83beec" stroke="#0f6cbd" stroke-width="2"/>
<circle cx="1125.100" cy="135.900" r="16.600" fill="#f3f2f1"/><circle cx="1125.100" cy="135.900" r="14.200" fill="#fafafa" stroke="#3b3a39" stroke-width="1.800"/></svg>
<span style="position:absolute;left:1090.8px;top:159px;font:normal normal 18.3px/21px 'Liberation Sans',sans-serif;color:#444;white-space:pre;will-change:transform;transform-origin:0 0;transform:scaleX(0.892);">Shapes</span>
<svg style="position:absolute;left:1114.3px;top:190.4px;overflow:visible" width="8.3" height="5.5"><path d="M0.6 0.6 L4.15 4.5 L7.700000000000001 0.6" fill="none" stroke="#444" stroke-width="1.6" stroke-linecap="round" stroke-linejoin="round"/></svg>
<svg style="position:absolute;left:1160px;top:105px;overflow:visible;" width="50" height="50" viewBox="1160 105 50 50"><rect x="1172.100" y="116.100" width="27.900" height="27.600" fill="#f8dc92" stroke="#e07a10" stroke-width="2"/>
<rect x="1164.200" y="108.200" width="19.800" height="19.500" fill="#f3f2f1"/><rect x="1166.100" y="110.100" width="16" height="15.700" fill="#fafafa" stroke="#3b3a39" stroke-width="1.800"/>
<rect x="1188.100" y="132.100" width="19.900" height="19.600" fill="#f3f2f1"/><rect x="1190" y="134" width="16.100" height="15.800" fill="#fafafa" stroke="#3b3a39" stroke-width="1.800"/></svg>
<span style="position:absolute;left:1154.4px;top:159px;font:normal normal 18.3px/21px 'Liberation Sans',sans-serif;color:#444;white-space:pre;will-change:transform;transform-origin:0 0;transform:scaleX(0.963);">Arrange</span>
<svg style="position:absolute;left:1181.1px;top:190.4px;overflow:visible" width="8.3" height="5.5"><path d="M0.6 0.6 L4.15 4.5 L7.700000000000001 0.6" fill="none" stroke="#444" stroke-width="1.6" stroke-linecap="round" stroke-linejoin="round"/></svg>
<svg style="position:absolute;left:1230px;top:105px;overflow:visible;" width="52" height="52" viewBox="1230 105 52 52"><rect x="1235" y="110.300" width="40" height="39.400" rx="3" fill="#ededed" stroke="#a19f9d" stroke-width="1.600"/>
<rect x="1243" y="146" width="19" height="6" fill="#f3f2f1"/><rect x="1273" y="122" width="5" height="14" fill="#f3f2f1"/>
<path d="M1258.500 143.300 L1275.700 125.300 C1277.300 123.700 1279.200 125 1278.100 126.800 C1274 133.500 1268 140 1261.700 145.500 Z" fill="#ededed" stroke="#a19f9d" stroke-width="1.400" stroke-linejoin="round"/>
<path d="M1244 149.300 C1250 150.300 1251.500 147 1253.500 144.500 C1256 141.500 1260 142.300 1261.500 145.500 C1263 150 1257 153.800 1251.500 153 C1248.500 152.600 1246 151.300 1244 149.300 Z" fill="#c8c6c4" stroke="#a19f9d" stroke-width="1.300" stroke-linejoin="round"/></svg>
<span style="position:absolute;left:1233.7px;top:159px;font:normal normal 18.3px/21px 'Liberation Sans',sans-serif;color:#a19f9d;white-space:pre;will-change:transform;transform-origin:0 0;transform:scaleX(0.925);">Quick</span>
<span style="position:absolute;left:1224.9px;top:183px;font:normal normal 18.3px/21px 'Liberation Sans',sans-serif;color:#a19f9d;white-space:pre;will-change:transform;transform-origin:0 0;transform:scaleX(0.868);">Styles</span>
<svg style="position:absolute;left:1275.2px;top:190.4px;overflow:visible" width="8.3" height="5.5"><path d="M0.6 0.6 L4.15 4.5 L7.700000000000001 0.6" fill="none" stroke="#a19f9d" stroke-width="1.5" stroke-linecap="round" stroke-linejoin="round"/></svg>
<svg style="position:absolute;left:1292px;top:104px;overflow:visible;" width="28" height="28" viewBox="1292 104 28 28"><rect x="1294.100" y="124.300" width="23.800" height="5.400" fill="#b3afab"/>
<path d="M1298.200 116 L1306.800 108.800 L1313.300 115.800 L1304.700 122.800 Z" fill="#ededed" stroke="#a19f9d" stroke-width="1.400" stroke-linejoin="round"/>
<path d="M1304.800 110.500 V107.800 C1304.800 105.800 1308.300 105.800 1308.300 107.800 V113.800" fill="none" stroke="#a19f9d" stroke-width="1.400"/>
<path d="M1311.500 113.300 C1314.500 112.500 1316 116 1315.600 120.500 C1314.500 117.500 1313.500 116.300 1312.500 116.200" fill="#c3c1bf" stroke="#a19f9d" stroke-width="1.200" stroke-linejoin="round"/></svg>
<svg style="position:absolute;left:1328.2px;top:117.3px;overflow:visible" width="8.3" height="5.5"><path d="M0.6 0.6 L4.15 4.5 L7.700000000000001 0.6" fill="none" stroke="#a19f9d" stroke-width="1.5" stroke-linecap="round" stroke-linejoin="round"/></svg>
<svg style="position:absolute;left:1292px;top:139px;overflow:visible;" width="28" height="28" viewBox="1292 139 28 28"><rect x="1294.100" y="158.200" width="23.800" height="5.600" fill="#b3afab"/>
<path d="M1308 142.200 H1296.300 V155.400 H1300" fill="none" stroke="#a19f9d" stroke-width="1.500"/>
<path d="M1303.800 151 L1313.300 141.700 C1314.500 140.500 1316 140.700 1317 141.700 C1318 142.800 1318 144.200 1317 145.200 L1307.400 154.600 L1302.200 156.200 Z" fill="#ededed" stroke="#a19f9d" stroke-width="1.300" stroke-linejoin="round"/>
<path d="M1303.800 151 L1307.400 154.600 M1311.800 143.200 L1315.500 146.800" fill="none" stroke="#a19f9d" stroke-width="1.100"/></svg>
<svg style="position:absolute;left:1328.2px;top:151.2px;overflow:visible" width="8.3" height="5.5"><path d="M0.6 0.6 L4.15 4.5 L7.700000000000001 0.6" fill="none" stroke="#a19f9d" stroke-width="1.5" stroke-linecap="round" stroke-linejoin="round"/></svg>
<svg style="position:absolute;left:1292px;top:175px;overflow:visible;" width="28" height="22" viewBox="1292 175 28 22"><g stroke="#a19f9d" stroke-width="1.500" stroke-linejoin="round">
<path d="M1300.200 177.800 H1312.400 L1317.200 183.500 L1311.700 194.200 H1299 L1295.100 188.800 Z" fill="#b9b7b5"/>
<path d="M1300.200 177.800 H1312.400 L1308.200 188.800 H1295.100 Z" fill="#ececec"/>
<path d="M1312.400 177.800 L1317.200 183.500 L1311.700 194.200 L1308.200 188.800 Z" fill="#dcdad8"/></g></svg>
<svg style="position:absolute;left:1324.1px;top:185.2px;overflow:visible" width="8.3" height="5.5"><path d="M0.6 0.6 L4.15 4.5 L7.700000000000001 0.6" fill="none" stroke="#a19f9d" stroke-width="1.5" stroke-linecap="round" stroke-linejoin="round"/></svg>
<span style="position:absolute;left:1173.539px;top:220px;font:normal normal 17px/19px 'Liberation Sans',sans-serif;color:#444;white-space:pre;will-change:transform;transform-origin:0 0;transform:scaleX(0.961);">Drawing</span>
<svg style="position:absolute;left:1340px;top:223px;overflow:visible;" width="12" height="12" viewBox="0 0 12 12"><g fill="none" stroke="#b5b3b1" stroke-width="1.300"><path d="M0.600 10.800 V0.600 H11"/><path d="M3.400 3.600 L11.600 11.600 M4.800 11.600 H11.600 V4.400"/></g></svg>
<svg style="position:absolute;left:1372px;top:104px;overflow:visible;" width="30" height="28" viewBox="1372 104 30 28"><circle cx="1389.600" cy="114.200" r="7.600" fill="#fafafa" stroke="#3b3a39" stroke-width="1.700"/><path d="M1384.200 120 L1375.400 128.700" stroke="#3b3a39" stroke-width="1.700" fill="none"/></svg>
<span style="position:absolute;left:1402.045px;top:109px;font:normal normal 18.3px/21px 'Liberation Sans',sans-serif;color:#444;white-space:pre;will-change:transform;transform-origin:0 0;transform:scaleX(0.955);">Find</span>
<svg style="position:absolute;left:1372px;top:138px;overflow:visible;" width="26" height="28" viewBox="1372 138 26 28"><path d="M1378.800 148.700 C1374 152 1373.800 159 1380 159.200 H1385 M1381.500 155.300 L1385.500 159.200 L1381.500 163.200" fill="none" stroke="#1e8bd8" stroke-width="1.700" stroke-linejoin="round" stroke-linecap="round"/></svg>
<span style="position:absolute;left:1381.643px;top:138px;font:normal normal 15.5px/17px 'Liberation Sans',sans-serif;color:#b144c0;white-space:pre;will-change:transform;transform-origin:0 0;transform:scaleX(1.157);">b</span>
<span style="position:absolute;left:1388.9px;top:150px;font:normal normal 15.5px/17px 'Liberation Sans',sans-serif;color:#1e8bd8;white-space:pre;will-change:transform;transform-origin:0 0;transform:scaleX(0.787);">c</span>
<span style="position:absolute;left:1402.106px;top:143px;font:normal normal 18.3px/21px 'Liberation Sans',sans-serif;color:#444;white-space:pre;will-change:transform;transform-origin:0 0;transform:scaleX(0.894);">Replace</span>
<svg style="position:absolute;left:1477.2px;top:151.2px;overflow:visible" width="8.3" height="5.6"><path d="M0.6 0.6 L4.15 4.6 L7.700000000000001 0.6" fill="none" stroke="#444" stroke-width="1.6" stroke-linecap="round" stroke-linejoin="round"/></svg>
<svg style="position:absolute;left:1372px;top:172px;overflow:visible;" width="24" height="28" viewBox="1372 172 24 28"><path d="M1377.600 176.500 V195 L1382.200 191 L1384.800 196.600 L1388.200 195 L1385.600 189.600 L1391.500 189.300 Z" fill="#fafafa" stroke="#3b3a39" stroke-width="1.500" stroke-linejoin="miter"/></svg>
<span style="position:absolute;left:1403px;top:177px;font:normal normal 18.3px/21px 'Liberation Sans',sans-serif;color:#444;white-space:pre;will-change:transform;transform-origin:0 0;transform:scaleX(0.883);">Select</span>
<svg style="position:absolute;left:1454.3px;top:184.3px;overflow:visible" width="8.3" height="5.6"><path d="M0.6 0.6 L4.15 4.6 L7.700000000000001 0.6" fill="none" stroke="#444" stroke-width="1.6" stroke-linecap="round" stroke-linejoin="round"/></svg>
<span style="position:absolute;left:1407.662px;top:220px;font:normal normal 17px/19px 'Liberation Sans',sans-serif;color:#444;white-space:pre;will-change:transform;transform-origin:0 0;transform:scaleX(0.938);">Editing</span>
<svg style="position:absolute;left:1617px;top:227px;overflow:visible;" width="15" height="9" viewBox="0 0 15 9"><path d="M0.800 7.800 L7.200 1.200 L13.600 7.800" fill="none" stroke="#444" stroke-width="1.600"/></svg>
<div style="position:absolute;left:55px;top:271px;width:180px;height:102px;box-sizing:border-box;background:#fff;border:1px solid #c8c8c8"></div>
<div style="position:absolute;left:55px;top:537px;width:180px;height:102px;box-sizing:border-box;background:#fff;border:1px solid #c8c8c8"></div>
<svg style="position:absolute;left:20px;top:266px;overflow:visible;" width="12" height="22" viewBox="20 266 12 22"><path d="M22.300 273.300 L27.250 270.500 V285" fill="none" stroke="#404040" stroke-width="1.700" stroke-linejoin="miter"/></svg>
<span style="position:absolute;left:21.2px;top:531px;font:normal normal 22.6px/25px 'Liberation Sans',sans-serif;color:#3c3c3c;white-space:pre;will-change:transform;transform-origin:0 0;transform:scaleX(0.808);-webkit-text-stroke:0.200px #e6e6e6;">5</span>
<div style="position:absolute;left:310px;top:253px;width:1269px;height:715px;box-sizing:border-box;background:#fff;border:1px solid #d0d0d0"></div>
<svg style="position:absolute;left:469px;top:370px;overflow:visible;" width="952" height="432" viewBox="0 0 952 432"><g fill="none" stroke="#686868" stroke-width="1" stroke-dasharray="2 1" shape-rendering="crispEdges"><rect x="0.500" y="0.500" width="951" height="249"/><rect x="0.500" y="258.500" width="951" height="172"/></g></svg>
<span style="position:absolute;left:689.012px;top:524px;font:normal normal 76px/85px 'Liberation Sans',sans-serif;color:#000;white-space:pre;will-change:transform;transform-origin:0 0;transform:scaleX(0.863);-webkit-text-stroke:0.700px #fff;">Click</span>
<span style="position:absolute;left:852.467px;top:524px;font:normal normal 76px/85px 'Liberation Sans',sans-serif;color:#000;white-space:pre;will-change:transform;transform-origin:0 0;transform:scaleX(1.033);-webkit-text-stroke:0.700px #fff;">to</span>
<span style="position:absolute;left:937.437px;top:524px;font:normal normal 76px/85px 'Liberation Sans',sans-serif;color:#000;white-space:pre;will-change:transform;transform-origin:0 0;transform:scaleX(0.921);-webkit-text-stroke:0.700px #fff;">add</span>
<span style="position:absolute;left:1074.744px;top:524px;font:normal normal 76px/85px 'Liberation Sans',sans-serif;color:#000;white-space:pre;will-change:transform;transform-origin:0 0;transform:scaleX(1.056);-webkit-text-stroke:0.700px #fff;">title</span>
<span style="position:absolute;left:818.081px;top:632px;font:normal normal 29.1px/32px 'Liberation Sans',sans-serif;color:#000;white-space:pre;will-change:transform;transform-origin:0 0;transform:scaleX(0.919);-webkit-text-stroke:0.350px #000;">Click</span>
<span style="position:absolute;left:884.6px;top:632px;font:normal normal 29.1px/32px 'Liberation Sans',sans-serif;color:#000;white-space:pre;will-change:transform;transform-origin:0 0;transform:scaleX(1.087);-webkit-text-stroke:0.350px #000;">to</span>
<span style="position:absolute;left:918.11px;top:632px;font:normal normal 29.1px/32px 'Liberation Sans',sans-serif;color:#000;white-space:pre;will-change:transform;transform-origin:0 0;transform:scaleX(0.99);-webkit-text-stroke:0.350px #000;">add</span>
<span style="position:absolute;left:974.9px;top:632px;font:normal normal 29.1px/32px 'Liberation Sans',sans-serif;color:#000;white-space:pre;will-change:transform;transform-origin:0 0;transform:scaleX(1.036);-webkit-text-stroke:0.350px #000;">subtitle</span>
<div style="position:absolute;left:90px;top:395px;width:192px;height:114px;box-sizing:border-box;background:#fff;border:4px solid #a82a1a"></div>
<div style="position:absolute;left:85px;top:390px;width:192px;height:114px;box-sizing:border-box;background:#fff;border:4px solid #a82a1a"></div>
<div style="position:absolute;left:80px;top:385px;width:192px;height:114px;box-sizing:border-box;background:#fff;border:6px solid #a82a1a"></div>
<div style="position:absolute;left:93px;top:367px;width:30px;height:40px;background:#d24726;"></div>
<span style="position:absolute;left:102.9px;top:375px;font:normal normal 23.2px/26px 'Liberation Sans',sans-serif;color:#fff;white-space:pre;will-change:transform;transform-origin:0 0;transform:scaleX(0.842);-webkit-text-stroke:0.500px #d24726;">3</span>
<svg style="position:absolute;left:270px;top:500px;overflow:visible;" width="230" height="370" viewBox="270 500 230 370"><path d="M484.700 857.400 L293.400 530" stroke="#000" stroke-width="3.900" fill="none"/>
<path d="M283.100 512.100 L301.800 528.600 L294.200 529.700 L288.400 536.500 Z" fill="#000"/></svg>
<span style="position:absolute;left:485.711px;top:851px;font:normal bold 29.6px/33px 'Liberation Sans',sans-serif;color:#000;white-space:pre;will-change:transform;transform-origin:0 0;transform:scaleX(0.989);-webkit-text-stroke:0.500px #000;">Click</span>
<span style="position:absolute;left:562.955px;top:851px;font:normal bold 29.6px/33px 'Liberation Sans',sans-serif;color:#000;white-space:pre;will-change:transform;transform-origin:0 0;transform:scaleX(1.022);-webkit-text-stroke:0.500px #000;">hold</span>
<span style="position:absolute;left:635px;top:851px;font:normal bold 29.6px/33px 'Liberation Sans',sans-serif;color:#000;white-space:pre;will-change:transform;transform-origin:0 0;transform:scaleX(1.013);-webkit-text-stroke:0.500px #000;">and</span>
<span style="position:absolute;left:695.457px;top:851px;font:normal bold 29.6px/33px 'Liberation Sans',sans-serif;color:#000;white-space:pre;will-change:transform;transform-origin:0 0;transform:scaleX(1.043);-webkit-text-stroke:0.500px #000;">drag</span>
<span style="position:absolute;left:771.4px;top:851px;font:normal bold 29.6px/33px 'Liberation Sans',sans-serif;color:#000;white-space:pre;will-change:transform;transform-origin:0 0;transform:scaleX(1.022);-webkit-text-stroke:0.500px #000;">the</span>
<span style="position:absolute;left:824.61px;top:851px;font:normal bold 29.6px/33px 'Liberation Sans',sans-serif;color:#000;white-space:pre;will-change:transform;transform-origin:0 0;transform:scaleX(0.99);-webkit-text-stroke:0.500px #000;">slides</span>
<span style="position:absolute;left:529.284px;top:890px;font:normal bold 29.6px/33px 'Liberation Sans',sans-serif;color:#000;white-space:pre;will-change:transform;transform-origin:0 0;transform:scaleX(1.016);-webkit-text-stroke:0.500px #000;">upwards</span>
<span style="position:absolute;left:660.789px;top:890px;font:normal bold 29.6px/33px 'Liberation Sans',sans-serif;color:#000;white-space:pre;will-change:transform;transform-origin:0 0;transform:scaleX(1.011);-webkit-text-stroke:0.500px #000;">or</span>
<span style="position:absolute;left:698.681px;top:890px;font:normal bold 29.6px/33px 'Liberation Sans',sans-serif;color:#000;white-space:pre;will-change:transform;transform-origin:0 0;transform:scaleX(1.019);-webkit-text-stroke:0.500px #000;">downwards</span>
<svg style="position:absolute;left:200px;top:458px;overflow:visible;" width="32" height="42" viewBox="200 458 32 42"><rect x="209" y="484" width="18" height="12" fill="none" stroke="#fff" stroke-width="2" shape-rendering="crispEdges"/>
<rect x="209" y="484" width="18" height="12" fill="none" stroke="#000" stroke-width="2" stroke-dasharray="1.500 1.500" shape-rendering="crispEdges"/>
<path d="M204.500 461.300 V485 L208.700 480.400 L214.800 490.300 L219 489.600 L215.400 476.800 L221.800 476.500 Z" fill="#fff" stroke="#000" stroke-width="1.100" stroke-linejoin="miter"/></svg>
<div style="position:absolute;left:1618px;top:243px;width:26px;height:657px;background:#f0f0f0;"></div>
<div style="position:absolute;left:1618px;top:243px;width:25px;height:25px;box-sizing:border-box;background:#fff;border:1px solid #ababab"></div>
<svg style="position:absolute;left:1625px;top:251px;overflow:visible;" width="12" height="7" viewBox="0 0 12 7"><path d="M0.500 6.500 L6 1 L11.500 6.500 Z" fill="#222"/></svg>
<div style="position:absolute;left:1618px;top:390px;width:25px;height:121px;box-sizing:border-box;background:#fff;border:1px solid #8f8f8f"></div>
<div style="position:absolute;left:1618px;top:875px;width:25px;height:25px;box-sizing:border-box;background:#fff;border:1px solid #ababab"></div>
<svg style="position:absolute;left:1625px;top:884px;overflow:visible;" width="12" height="7" viewBox="0 0 12 7"><path d="M0.500 0.500 L6 6 L11.500 0.500 Z" fill="#222"/></svg>
<svg style="position:absolute;left:1623px;top:904px;overflow:visible;" width="15" height="19" viewBox="0 0 15 19"><g fill="#606060" stroke="#606060" stroke-width="1.600" stroke-linejoin="round">
<path d="M7.500 1 L14 8.500 H1 Z"/><path d="M7.500 10.500 L14 18 H1 Z"/></g></svg>
<svg style="position:absolute;left:1623px;top:930px;overflow:visible;" width="15" height="19" viewBox="0 0 15 19"><g fill="#606060" stroke="#606060" stroke-width="1.600" stroke-linejoin="round">
<path d="M7.500 18 L14 10.500 H1 Z"/><path d="M7.500 8.500 L14 1 H1 Z"/></g></svg>
<span style="position:absolute;left:13.3px;top:993px;font:normal normal 17.6px/20px 'Liberation Sans',sans-serif;color:#505050;white-space:pre;will-change:transform;transform-origin:0 0;transform:scaleX(0.869);">Slide 2 of 5</span>
<svg style="position:absolute;left:116px;top:990px;overflow:visible;" width="26" height="24" viewBox="116 990 26 24"><g fill="none" stroke="#444" stroke-width="1.600" stroke-linejoin="miter"><path d="M125.900 1010.100 H119.100 V993.700 H125 C127 993.700 128.300 995 128.300 996.500 V1005 M128.300 996.500 C128.300 995 129.600 993.700 131.600 993.700 H137.200 V1001.800"/><path d="M126.500 1007.300 L131.400 1012.200 L139.100 1003.800"/></g></svg>
<span style="position:absolute;left:165.013px;top:993px;font:normal normal 17.6px/20px 'Liberation Sans',sans-serif;color:#505050;white-space:pre;will-change:transform;transform-origin:0 0;transform:scaleX(0.887);">English (Nigeria)</span>
<svg style="position:absolute;left:300px;top:989px;overflow:visible;" width="26" height="25" viewBox="300 989 26 25"><g fill="none" stroke="#444" stroke-width="1.450" stroke-linecap="round" stroke-linejoin="round"><circle cx="311.500" cy="994.700" r="2.750"/>
<path d="M308.700 996.600 C306.500 995.800 305.200 994.900 303.800 994.800 C301.800 994.800 301.700 997.600 303.200 998.500 C304.500 999.200 306.200 999.500 307.600 1000.100 C307.900 1001.500 307.500 1003.500 307 1005 C306.500 1006.500 305.700 1008.300 305.700 1009.800 C305.700 1012 308.300 1012.600 309.300 1011 C310.300 1009.300 310.800 1006.800 311.400 1004.800 C311.900 1005.300 312.700 1007 313.200 1008.300"/>
<path d="M314.200 996.600 C316.500 995.800 317.600 994.900 319 994.800 C321.200 994.800 321.200 997.600 319.700 998.500 C318.500 999.200 316.800 999.500 315.500 1000.100"/>
<path d="M313.600 1002.400 L323.100 1011.800 M322.900 1002.400 L313.400 1011.800" stroke-linecap="butt"/></g></svg>
<span style="position:absolute;left:329.5px;top:993px;font:normal normal 17.6px/20px 'Liberation Sans',sans-serif;color:#505050;white-space:pre;will-change:transform;transform-origin:0 0;transform:scaleX(0.869);">Accessibility: Investigate</span>
<svg style="position:absolute;left:868px;top:989px;overflow:visible;" width="28" height="25" viewBox="868 989 28 25"><g fill="none" stroke="#444" stroke-width="1.500"><path d="M877.200 996 L882 991.500 L886.800 996"/><path d="M870.200 1002 H893.500 M870.200 1007 H893.500 M870.200 1012 H893.500"/></g></svg>
<span style="position:absolute;left:897.028px;top:993px;font:normal normal 17.6px/20px 'Liberation Sans',sans-serif;color:#505050;white-space:pre;will-change:transform;transform-origin:0 0;transform:scaleX(0.872);">Notes</span>
<svg style="position:absolute;left:964px;top:989px;overflow:visible;" width="26" height="25" viewBox="964 989 26 25"><path d="M967.200 992.500 H986.600 V1006.800 H975.500 L970.500 1011.500 V1006.800 H967.200 Z" fill="none" stroke="#444" stroke-width="1.500" stroke-linejoin="round"/></svg>
<span style="position:absolute;left:992.7px;top:993px;font:normal normal 17.6px/20px 'Liberation Sans',sans-serif;color:#505050;white-space:pre;will-change:transform;transform-origin:0 0;transform:scaleX(0.873);">Comments</span>
<div style="position:absolute;left:1095px;top:986px;width:60px;height:32px;background:#d2d0ce;"></div>
<svg style="position:absolute;left:1112px;top:990px;overflow:visible;" width="26" height="24" viewBox="1112 990 26 24"><g fill="none" stroke="#444" stroke-width="1.600"><rect x="1115.400" y="994.600" width="19.500" height="15.300"/><path d="M1119.800 994.600 V1010 M1119.800 1006.600 H1135"/><rect x="1123.800" y="997.800" width="8.200" height="5.400" stroke-width="1.500"/></g></svg>
<svg style="position:absolute;left:1172px;top:990px;overflow:visible;" width="26" height="24" viewBox="1172 990 26 24"><rect x="1175.7" y="994.5" width="7.400" height="6" fill="none" stroke="#444" stroke-width="1.500"/><rect x="1175.7" y="1004" width="7.400" height="6" fill="none" stroke="#444" stroke-width="1.500"/><rect x="1187.3" y="994.5" width="7.400" height="6" fill="none" stroke="#444" stroke-width="1.500"/><rect x="1187.3" y="1004" width="7.400" height="6" fill="none" stroke="#444" stroke-width="1.500"/></svg>
<svg style="position:absolute;left:1232px;top:989px;overflow:visible;" width="26" height="25" viewBox="1232 989 26 25"><g fill="none" stroke="#444" stroke-width="1.500" stroke-linejoin="round"><path d="M1244.500 994.500 C1241.500 992.300 1238 992.300 1235.400 993.300 V1008.800 C1238 1007.800 1241.500 1007.800 1244.500 1010 C1247.500 1007.800 1251 1007.800 1253.600 1008.800 V993.300 C1251 992.300 1247.500 992.300 1244.500 994.500 Z M1244.500 994.500 V1010"/>
<path d="M1238 997 H1242 M1238 1000.300 H1242 M1238 1003.600 H1242 M1247 997 H1251 M1247 1000.300 H1251 M1247 1003.600 H1251" stroke-width="1.200"/></g></svg>
<svg style="position:absolute;left:1292px;top:989px;overflow:visible;" width="26" height="25" viewBox="1292 989 26 25"><g fill="none" stroke="#444" stroke-width="1.500"><path d="M1294.500 992 H1314 M1297.400 992 V1003 H1311.500 V992 M1304.500 1003 V1010 M1298.900 1010.100 H1310"/><path d="M1301 996.300 H1308" stroke-width="1.400"/></g></svg>
<div style="position:absolute;left:1343px;top:1001px;width:11.5px;height:1.3px;background:#605e5c;"></div>
<div style="position:absolute;left:1363px;top:1001px;width:148px;height:1.8px;background:#444;"></div>
<div style="position:absolute;left:1407px;top:993px;width:8.3px;height:17px;background:#3b3a39;"></div>
<div style="position:absolute;left:1436.3px;top:998px;width:1.5px;height:8px;background:#444;"></div>
<div style="position:absolute;left:1519px;top:1001px;width:11.6px;height:1.3px;background:#605e5c;"></div>
<div style="position:absolute;left:1524.2px;top:996.3px;width:1.3px;height:10.8px;background:#605e5c;"></div>
<span style="position:absolute;left:1548.8px;top:993px;font:normal normal 15.2px/17px 'Liberation Sans',sans-serif;color:#505050;white-space:pre;will-change:transform;transform-origin:0 0;transform:scaleX(1.017);">66%</span>
<svg style="position:absolute;left:1596px;top:989px;overflow:visible;" width="26" height="25" viewBox="1596 989 26 25"><g fill="none" stroke="#444" stroke-width="1.500"><rect x="1605.600" y="998" width="7.600" height="7.600"/>
<path d="M1605.800 994.600 L1609.400 991.300 L1613 994.600 M1605.800 1008.600 L1609.400 1011.900 L1613 1008.600 M1602.300 998.200 L1599 1001.800 L1602.300 1005.400 M1616.500 998.200 L1619.800 1001.800 L1616.500 1005.400"/></g></svg>
</body></html>
